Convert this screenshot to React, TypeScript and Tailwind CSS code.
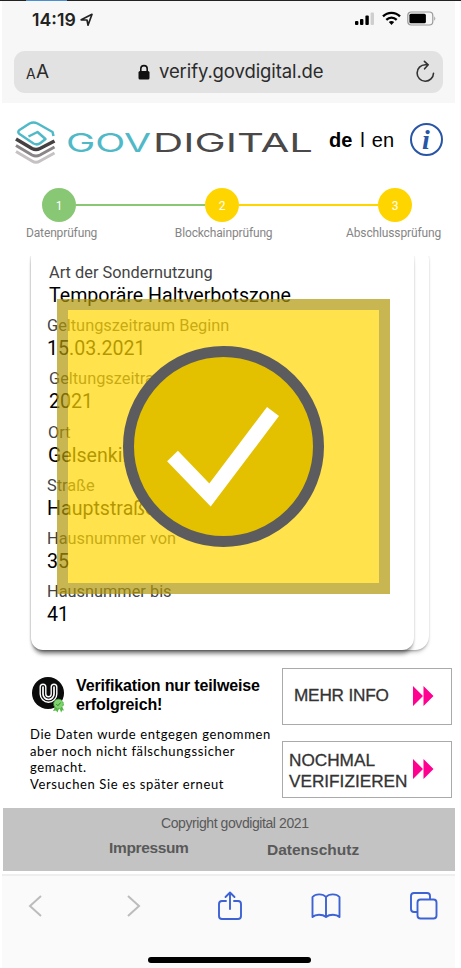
import React from "react";

const fields = [
  { label: "Art der Sondernutzung", value: "Temporäre Haltverbotszone", l: "pl-[2px]", v: "pl-[2px]" },
  { label: "Geltungszeitraum Beginn", value: "15.03.2021", l: "", v: "" },
  { label: "Geltungszeitraum Ende", value: "2021", l: "pl-[2px]", v: "pl-[2px]" },
  { label: "Ort", value: "Gelsenkirchen", l: "pl-px", v: "pl-px" },
  { label: "Straße", value: "Hauptstraße", l: "", v: "" },
  { label: "Hausnummer von", value: "35", l: "", v: "" },
  { label: "Hausnummer bis", value: "41", l: "", v: "" },
];

function StatusBar() {
  return (
    <div className="flex h-[50px] items-start pl-[30px] pr-[18px] pt-[8px]">
      <span className="font-[Inter] text-[17.7px] font-semibold leading-[21px] text-[#222]">14:19</span>
      <svg className="ml-[4px] mt-[4px]" width="13" height="14" viewBox="0 0 13 14" fill="none" stroke="#222" strokeWidth="1.7" strokeLinejoin="round">
        <path d="M1.200 6.800 12 1.300 8 12.200 7 7Z" />
      </svg>
      <div className="ml-auto flex items-center pt-[2px]">
        <svg width="20" height="15" viewBox="0 0 20 15">
          <rect x="0" y="10" width="3.4" height="4" rx="1" />
          <rect x="5" y="8" width="3.4" height="6" rx="1" />
          <rect x="10.4" y="4.5" width="3.4" height="9.5" rx="1" />
          <rect x="15.6" y="1.5" width="3.4" height="12.5" rx="1" fill="#cfcfcf" />
        </svg>
        <svg className="ml-[7px]" width="19" height="15" viewBox="0 0 19 15" fill="none" stroke="#000" strokeWidth="2.3">
          <path d="M1 5.4C5.8.6 13.2.6 18 5.4" />
          <path d="M4.3 8.8c3-2.9 7.4-2.9 10.4 0" />
          <path d="M6.8 11.1c1.6-1.4 3.8-1.4 5.4 0L9.5 13.9Z" fill="#000" stroke="none" />
        </svg>
        <svg className="ml-[6px]" width="30" height="15" viewBox="0 0 30 15">
          <rect x=".8" y="1" width="25" height="13" rx="3.5" fill="none" stroke="#999" strokeWidth="1.2" />
          <rect x="2.4" y="2.8" width="16.5" height="9.4" rx="1.5" />
          <path d="M27.3 5.2q2 2.3 0 4.6Z" fill="#999" />
        </svg>
      </div>
    </div>
  );
}

function AddressBar() {
  return (
    <div className="mx-[12px] flex h-[42px] items-center rounded-[11px] bg-[#e2e2e3] pl-[12px] pr-[9px] text-[#2b2b2b]">
      <span className="mt-[3px] w-[10px] font-[Inter] text-[14px]">A</span>
      <span className="w-[14px] font-[Inter] text-[19px]">A</span>
      <svg className="ml-[88px]" width="12" height="16" viewBox="0 0 12 16">
        <rect x=".5" y="7" width="11" height="8.5" rx="1.5" fill="#111" />
        <path d="M2.8 7.5V4.8a3.2 3.2 0 0 1 6.4 0v2.7" fill="none" stroke="#111" strokeWidth="1.6" />
      </svg>
      <span className="ml-[9px] font-[Inter] text-[18.5px] tracking-[-0.1px]">verify.govdigital.de</span>
      <svg className="ml-auto mr-[-2px]" width="21" height="24" viewBox="0 0 21 24" fill="none" stroke="#333" strokeWidth="1.6" strokeLinecap="round" strokeLinejoin="round">
        <path d="M18.5 13.2a8.2 8.2 0 1 1-8.2-8.4h3M9.4 1.3l3.8 3.5-3.6 4" />
      </svg>
    </div>
  );
}

function Brand() {
  return (
    <svg width="300" height="46" viewBox="0 0 300 46">
      <g fill="none" strokeLinejoin="round">
        <path d="M1 32.500 17 42q4 2.500 8 0L39.500 34" stroke="#c6c2c3" strokeWidth="3" />
        <path d="M1 26.500 17 36q4 2 8 0l14.500-8" stroke="#8a8586" strokeWidth="3" />
        <path d="M1 20 17 29.500q4 2 8 0L39.500 22" stroke="#454142" strokeWidth="3.600" />
        <path d="M38.500 17 37.500 13 22.500 4.500Q18.500 2.500 14.500 4.500L4.500 11q-2.500 2 0 4L18.500 24.500q4 2 7-.5L30.500 20 22.500 13 13.500 17.500" stroke="#50b9c8" strokeWidth="2.500" />
      </g>
      <text x="51" y="33.300" textLength="85" lengthAdjust="spacingAndGlyphs" fontFamily="Inter" fontSize="26" fill="#50b9c8">GOV</text>
      <text x="138" y="33.300" textLength="160" lengthAdjust="spacingAndGlyphs" fontFamily="Inter" fontSize="26" fill="#4b4849">DIGITAL</text>
    </svg>
  );
}

function Header() {
  return (
    <header className="flex h-[85px] items-start pl-[13px] pr-[12px] pt-[16px] font-['Liberation_Sans']">
      <Brand />
      <div className="ml-[14px] mt-[9px] flex whitespace-nowrap text-[20px] leading-[24px] text-black">
        <b>de</b>
        <span className="ml-[8px] mr-[7px]">l</span>
        <span>en</span>
      </div>
      <div className="ml-auto mt-[4px] flex size-[33px] items-center justify-center rounded-full border-2 border-[#2855a5]">
        <span className="pr-px pt-px font-['Liberation_Serif'] text-[28px] font-bold italic leading-[28px] text-[#2855a5]">i</span>
      </div>
    </header>
  );
}

function Steps() {
  const dot = "flex size-[34px] shrink-0 items-center justify-center rounded-full text-[12px] text-white pt-[2px]";
  return (
    <div className="h-[68px] font-[Roboto]">
      <div className="flex items-center pl-[40px] pr-[43px]">
        <div className={dot + " bg-[#88c774]"}>1</div>
        <div className="mb-px h-[2px] flex-1 bg-[#88c774]" />
        <div className={dot + " bg-[#ffd500]"}>2</div>
        <div className="mb-px h-[2px] w-[139px] bg-[#ffd500]" />
        <div className={dot + " bg-[#ffd500]"}>3</div>
      </div>
      <div className="flex justify-between pl-[24px] pr-[14px] pt-[4px] text-[12px] leading-[14px] tracking-[-0.14px] text-[#858585]">
        <span>Datenprüfung</span>
        <span className="pl-[4px]">Blockchainprüfung</span>
        <span>Abschlussprüfung</span>
      </div>
    </div>
  );
}

function Result() {
  return (
    <section className="relative h-[404px] overflow-hidden pl-[29px]">
      <div className="-mt-[10px] h-[404px] w-[398px] rounded-[14px] bg-white pr-[15px] shadow-[0_1px_2px_rgba(0,0,0,0.18),0_4px_4px_-2px_rgba(0,0,0,0.25)]">
        <div className="h-full rounded-[12px] bg-white pl-[16px] pt-[16px] font-[Roboto] shadow-[0_1px_2px_rgba(0,0,0,0.18),0_6px_4px_-2px_rgba(0,0,0,0.38)]">
          {fields.map((f) => (
            <div key={f.label} className="h-[53.2px] whitespace-nowrap">
              <div className={"text-[16.35px] leading-[22px] text-[#444] " + f.l}>{f.label}</div>
              <div className={"text-[19.6px] leading-[23px] text-black " + f.v}>{f.value}</div>
            </div>
          ))}
        </div>
      </div>
      <div className="absolute left-[55px] top-[43px] flex h-[295px] w-[333px] items-center justify-center border-[11px] border-[rgba(177,151,8,0.7)] bg-[rgba(255,213,0,0.7)] bg-clip-padding">
        <div className="flex size-[201px] items-center justify-center rounded-full border-[11px] border-[#5c5c5e] bg-[#e3c000]">
          <svg width="131" height="121" viewBox="158 386 131 121" fill="none" stroke="#fff" strokeWidth="15" className="shrink-0">
            <path d="m172.500 456 37.500 39 63-83.500" />
          </svg>
        </div>
      </div>
    </section>
  );
}

function Seal() {
  return (
    <svg width="34" height="37" viewBox="0 0 34 37" fill="none">
      <circle cx="18" cy="17" r="16" fill="#0b0b0b" />
      <path d="M13 11v7a5.500 5.500 0 0 0 11 0v-7" stroke="#fff" strokeWidth="7" strokeLinecap="round" />
      <path d="M13 11v7a5.500 5.500 0 0 0 11 0v-7" stroke="#0b0b0b" strokeWidth="4.200" strokeLinecap="round" />
      <path d="M13 11v7a5.500 5.500 0 0 0 11 0v-7" stroke="#fff" strokeWidth="1.700" strokeLinecap="round" />
      <path d="m26 29-3 6 3-.5 1.500 2 1.800-5 1.800 5 1.200-2.200 1.700.3-3-6Z" fill="#55b848" />
      <circle cx="28.500" cy="28" r="4.800" fill="#7fd46f" stroke="#4aa83e" strokeDasharray="2 1" />
      <path d="m26.300 28 1.600 1.700 2.800-3.200" stroke="#2f8a28" />
    </svg>
  );
}

function Arrows() {
  return (
    <svg width="21" height="20" viewBox="0 0 21 20" fill="#ff0090" className="mb-[2px] shrink-0">
      <path d="M0 0v20l10-10ZM10.500 0v20l10-10Z" />
    </svg>
  );
}

function Actions() {
  return (
    <section className="flex h-[148px] font-['Liberation_Sans']">
      <div className="w-[280px] shrink-0 whitespace-nowrap pl-[28px] pt-[16px] text-black">
        <div className="flex">
          <Seal />
          <h2 className="ml-[12px] text-[16px] font-bold leading-[19px] tracking-[-0.15px]">
            Verifikation nur teilweise
            <br />
            erfolgreich!
          </h2>
        </div>
        <p className="mt-[12px] font-[Lato] text-[13px] leading-[16.7px] tracking-[0.62px]">
          Die Daten wurde entgegen genommen
          <br />
          aber noch nicht fälschungssicher
          <br />
          gemacht.
          <br />
          Versuchen Sie es später erneut
        </p>
      </div>
      <div className="flex flex-col gap-[16px] pt-[8px] text-[17.200px] leading-[21px] text-[#333]">
        <button className="flex h-[57px] w-[170px] items-center justify-between whitespace-nowrap border border-[#aaa] pl-[11px] pr-[17px] text-left">
          <span className="mb-[2px] tracking-[-0.2px] [-webkit-text-stroke:0.3px_#333]">MEHR INFO</span>
          <Arrows />
        </button>
        <button className="flex h-[57px] w-[170px] items-center justify-between whitespace-nowrap border border-[#aaa] pl-[6px] pr-[17px] text-left">
          <span className="pt-[3px] [-webkit-text-stroke:0.3px_#333]">
            NOCHMAL
            <br />
            VERIFIZIEREN
          </span>
          <Arrows />
        </button>
      </div>
    </section>
  );
}

function Footer() {
  return (
    <footer className="ml-px h-[63px] bg-[#c3c3c3] pt-[7px] font-['Liberation_Sans'] text-[#595959]">
      <div className="pl-[158px] text-[14px] leading-[17px] tracking-[-0.42px]">Copyright govdigital 2021</div>
      <div className="flex pl-[106px] text-[15.500px] font-bold leading-[18px]">
        <span className="w-[80px] pt-[7px] tracking-[-0.35px]">Impressum</span>
        <span className="ml-[78px] pt-[9px]">Datenschutz</span>
      </div>
    </footer>
  );
}

function BrowserToolbar() {
  return (
    <div className="mt-[3px] h-[94px] border-t-2 border-[#eee] bg-[#fafafa]">
      <div className="flex h-[60px] items-center justify-between pl-[26px] pr-[17px]">
        <svg width="15" height="24" viewBox="0 0 15 24" fill="none" stroke="#bcbcbc" strokeWidth="2"><path d="M13 2 2 12l11 10" /></svg>
        <svg className="ml-[14px]" width="15" height="24" viewBox="0 0 15 24" fill="none" stroke="#bcbcbc" strokeWidth="2"><path d="m2 2 11 10L2 22" /></svg>
        <svg className="ml-[7px]" width="24" height="30" viewBox="0 0 24 30" fill="none" stroke="#3c62d4" strokeWidth="1.9" strokeLinecap="round" strokeLinejoin="round">
          <path d="M8 10H4q-3 0-3 3v12q0 3 3 3h16q3 0 3-3V13q0-3-3-3h-4M12 18V1.500M7.500 6 12 1.500 16.500 6" />
        </svg>
        <svg width="30" height="26" viewBox="0 0 30 26" fill="none" stroke="#3c62d4" strokeWidth="1.900" strokeLinejoin="round">
          <path d="M15 4C12 .5 4.500.5 1.500 4v20c3-3 10-3 13.500 0 3.500-3 10.500-3 13.500 0V4C25.500.5 18 .5 15 4ZM15 4v20" />
        </svg>
        <svg width="28" height="28" viewBox="0 0 28 28" fill="none" stroke="#3c62d4" strokeWidth="1.900">
          <path d="M7 20H4q-3 0-3-3V4q0-3 3-3h13q3 0 3 3v3" />
          <rect x="7.500" y="7.500" width="19" height="19" rx="3" />
        </svg>
      </div>
      <div className="ml-[146px] mt-[21px] h-[6px] w-[163px] rounded-full bg-black" />
    </div>
  );
}

export default function App() {
  return (
    <div className="h-[968px] w-[461px] overflow-hidden bg-white">
      <div className="h-px bg-[#222] pl-[26px]">
        <div className="h-px w-[41px] bg-[#4a8fd0]" />
      </div>
      <div className="ml-[2px] w-[453px]">
        <div className="h-[102px] bg-[#f7f7f7]">
          <StatusBar />
          <AddressBar />
        </div>
        <Header />
        <Steps />
        <Result />
        <Actions />
        <Footer />
        <BrowserToolbar />
      </div>
    </div>
  );
}
